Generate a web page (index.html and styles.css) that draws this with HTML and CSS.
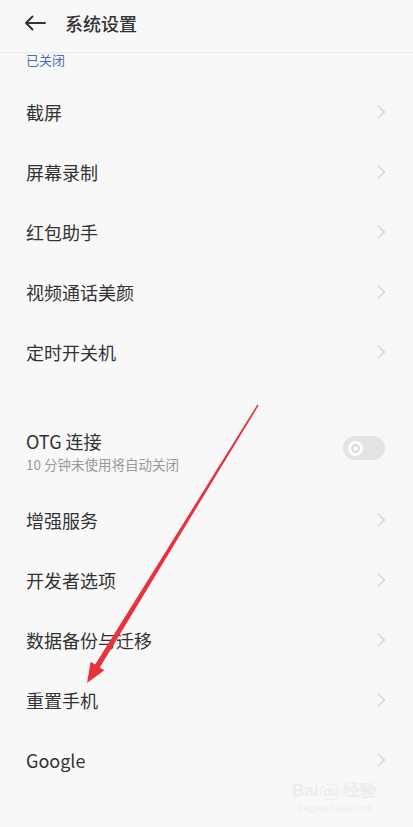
FILE: index.html
```html
<!DOCTYPE html>
<html lang="zh">
<head>
<meta charset="utf-8">
<title>系统设置</title>
<link rel="stylesheet" href="styles.css">
</head>
<body>
<div class="page">
  <header class="header">
    <svg class="back" width="22" height="16" viewBox="0 0 22 16"><path d="M21 8H2M8.5 1.5L2 8l6.5 6.5" fill="none" stroke="#333" stroke-width="2" stroke-linecap="round" stroke-linejoin="round"/></svg>
    <span class="title">系统设置</span>
  </header>
  <div class="status">已关闭</div>
  <ul class="list">
    <li class="row"><span>截屏</span><i class="chev"></i></li>
    <li class="row"><span>屏幕录制</span><i class="chev"></i></li>
    <li class="row"><span>红包助手</span><i class="chev"></i></li>
    <li class="row"><span>视频通话美颜</span><i class="chev"></i></li>
    <li class="row"><span>定时开关机</span><i class="chev"></i></li>
  </ul>
  <div class="otg">
    <div class="otg-text">
      <span class="otg-title">OTG 连接</span>
      <span class="otg-sub">10 分钟未使用将自动关闭</span>
    </div>
    <span class="toggle"><span class="knob"></span></span>
  </div>
  <ul class="list">
    <li class="row"><span>增强服务</span><i class="chev"></i></li>
    <li class="row"><span>开发者选项</span><i class="chev"></i></li>
    <li class="row"><span>数据备份与迁移</span><i class="chev"></i></li>
    <li class="row"><span>重置手机</span><i class="chev"></i></li>
    <li class="row"><span>Google</span><i class="chev"></i></li>
  </ul>
  <svg class="annot" width="413" height="827" viewBox="0 0 413 827">
    <polygon points="257.4,404.6 258.6,405.4 99.8,667.4 104.3,670.2 87,683 90.7,661.8 95.2,664.6" fill="#e8323c"/>
  </svg>
  <div class="watermark">
    <span class="wm-logo">Bai<span class="wm-du">du</span>经验</span>
    <span class="wm-url">jingyan.baidu.com</span>
  </div>
</div>
</body>
</html>
```
FILE: styles.css
```css
* { box-sizing: border-box; }
html, body { margin: 0; padding: 0; }
body {
  background: #f8f8f8;
  font-family: "Noto Sans CJK SC", "Noto Sans", Roboto, sans-serif;
  color: #333;
}
.page {
  position: relative;
  width: 413px;
  height: 827px;
  overflow: hidden;
  background: #f8f8f8;
}
.header {
  height: 53px;
  display: flex;
  align-items: flex-start;
  padding: 10px 0 0 24px;
  border-bottom: 1px solid #ebebeb;
}
.back { margin-top: 5px; }
.title {
  margin-left: 19px;
  font-size: 18px;
  line-height: 26px;
  font-weight: 500;
  color: #333;
}
.status {
  height: 29px;
  padding-left: 26px;
  font-size: 13px;
  line-height: 14px;
  color: #4a6cb3;
}
.list { list-style: none; margin: 0; padding: 0; }
.row {
  height: 60px;
  display: flex;
  align-items: center;
  justify-content: space-between;
  padding: 0 28px 0 26px;
  font-size: 18px;
  color: #333;
}
.chev {
  width: 10px;
  height: 10px;
  border-top: 1.5px solid #c9c9c9;
  border-right: 1.5px solid #c9c9c9;
  transform: rotate(45deg);
  margin-right: 2px;
}
.otg {
  margin-top: 24px;
  height: 84px;
  display: flex;
  align-items: center;
  justify-content: space-between;
  padding: 0 28px 0 26px;
}
.otg-text { display: flex; flex-direction: column; gap: 3px; margin-top: 7px; }
.otg-title { font-size: 18px; line-height: 22px; color: #333; }
.otg-sub { font-size: 13.5px; line-height: 18px; color: #999; }
.toggle {
  width: 42px;
  height: 24px;
  border-radius: 12px;
  background: #e3e3e3;
  display: flex;
  align-items: center;
  padding-left: 5px;
}
.knob {
  width: 15px;
  height: 15px;
  border-radius: 50%;
  background: #fff;
  border: 3px solid #fff;
  box-shadow: inset 0 0 0 2px #d6d6d6;
}
.annot { position: absolute; left: 0; top: 0; pointer-events: none; }
.watermark {
  position: absolute;
  left: 292px;
  top: 781px;
  display: flex;
  flex-direction: column;
  align-items: center;
  color: #ececec;
  pointer-events: none;
}
.wm-logo { font-family: "Liberation Sans", sans-serif; font-size: 17px; font-weight: bold; line-height: 20px; }
.wm-du { font-size: 12px; border: 1px solid #ececec; border-radius: 8px; padding: 0 2px; margin: 0 2px; }
.wm-url { font-family: "Liberation Serif", serif; font-size: 10px; line-height: 12px; }
```
